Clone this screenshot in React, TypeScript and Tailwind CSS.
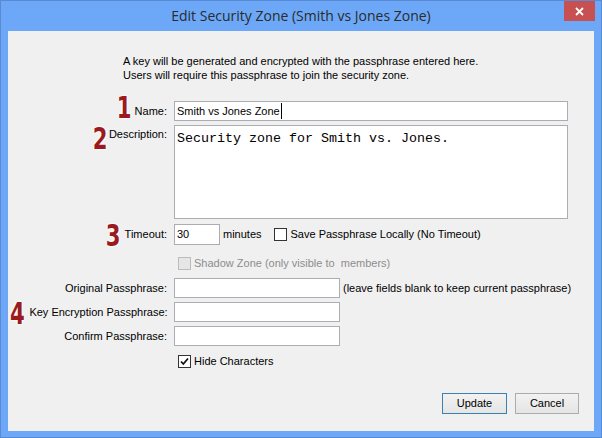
import React from "react";

const Mark = ({ n, className = "" }: { n: string; className?: string }) => (
  <span
    className={
      "inline-block scale-x-[0.76] font-['DejaVu_Sans_Condensed','Liberation_Sans',sans-serif] font-bold text-[31px] leading-[24px] text-[#9a1b1e] [text-shadow:0_0_2px_#fff,0_0_2px_#fff,0_0_2px_#fff,0_0_3px_#fff] " +
      className
    }
  >
    {n}
  </span>
);

const Box = ({ checked = false, disabled = false }: { checked?: boolean; disabled?: boolean }) => (
  <span
    className={
      "w-[13px] h-[13px] flex items-center justify-center border " +
      (disabled ? "border-[#bcbcbc] bg-[#e6e6e6]" : "border-[#333] bg-white")
    }
  >
    {checked && (
      <svg width="11" height="11" viewBox="0 0 11 11">
        <path d="M2 5.5 L4.3 8 L9 2.5" stroke="#111" strokeWidth="1.8" fill="none" />
      </svg>
    )}
  </span>
);

const Field = ({ w, children }: { w: string; children?: React.ReactNode }) => (
  <div className={"h-[20px] bg-white border border-[#abadb3] flex items-center px-[2px] " + w}>{children}</div>
);

const App = () => {
  return (
    <div className="w-[602px] h-[438px] bg-[#6ca8f7] border border-[#5a8bd2] flex flex-col relative font-['Liberation_Sans',Arial,sans-serif] text-[11px] text-black whitespace-nowrap">
      <div className="h-[30px] flex items-center justify-center font-['Open_Sans',sans-serif] text-[14px] text-[#2b2b2b] pb-[1px]">
        Edit Security Zone (Smith vs Jones Zone)
      </div>
      <div className="absolute right-[6px] top-0 w-[31px] h-[20px] bg-[#c75050] flex items-center justify-center">
        <svg width="9" height="9" viewBox="0 0 9 9">
          <path d="M1 1 L8 8 M8 1 L1 8" stroke="#fff" strokeWidth="1.8" />
        </svg>
      </div>

      <div className="flex-1 mx-[7px] mb-[6px] bg-[#f0f0f0] flex flex-col">
        <div className="mt-[23px] pl-[115px] leading-[14px]">
          <p>A key will be generated and encrypted with the passphrase entered here.</p>
          <p>Users will require this passphrase to join the security zone.</p>
        </div>

        <div className="mt-[19px] flex h-[20px] items-center">
          <div className="w-[159px] flex items-center justify-end gap-[3px]">
            <Mark n="1" className="-mt-[8px] origin-right" />
            <span>Name:</span>
          </div>
          <div className="ml-[7px]">
            <Field w="w-[394px]">
              <span className="border-r border-black pr-[1px]">Smith vs Jones Zone</span>
            </Field>
          </div>
        </div>

        <div className="mt-[4px] flex">
          <div className="w-[159px] flex items-start justify-end gap-[2px]">
            <Mark n="2" className="mt-[1px] origin-right" />
            <span className="mt-[1px]">Description:</span>
          </div>
          <div className="ml-[7px] w-[394px] h-[94px] bg-white border border-[#abadb3] px-[2px] pt-[5px] font-['Liberation_Mono',monospace] text-[13.33px] leading-[16px]">
            Security zone for Smith vs. Jones.
          </div>
        </div>

        <div className="mt-[5px] flex h-[21px] items-center">
          <div className="w-[159px] flex items-center justify-end gap-[4px]">
            <Mark n="3" className="mt-[1px] origin-right" />
            <span>Timeout:</span>
          </div>
          <div className="ml-[7px] flex items-center">
            <div className="w-[46px] h-[21px] bg-white border border-[#abadb3] flex items-center px-[2px]">30</div>
            <span className="ml-[3px]">minutes</span>
            <span className="ml-[12px]">
              <Box />
            </span>
            <span className="ml-[4px]">Save Passphrase Locally (No Timeout)</span>
          </div>
        </div>

        <div className="mt-[8px] flex h-[20px] items-center pl-[170px] gap-[3px] text-[#8d8d8d]">
          <Box disabled />
          <span>Shadow Zone (only visible to&nbsp; members)</span>
        </div>

        <div className="mt-[5px] flex h-[20px] items-center">
          <div className="w-[159px] text-right">Original Passphrase:</div>
          <div className="ml-[7px]">
            <Field w="w-[166px]" />
          </div>
          <span className="ml-[3px]">(leave fields blank to keep current passphrase)</span>
        </div>

        <div className="mt-[4px] flex h-[20px] items-center">
          <div className="w-[159px] flex items-center justify-between pl-[2px]">
            <Mark n="4" className="mt-[1px] origin-left" />
            <span>Key Encryption Passphrase:</span>
          </div>
          <div className="ml-[7px]">
            <Field w="w-[166px]" />
          </div>
        </div>

        <div className="mt-[4px] flex h-[20px] items-center">
          <div className="w-[159px] text-right">Confirm Passphrase:</div>
          <div className="ml-[7px]">
            <Field w="w-[166px]" />
          </div>
        </div>

        <div className="mt-[5px] flex h-[20px] items-center pl-[170px] gap-[3px]">
          <Box checked />
          <span>Hide Characters</span>
        </div>

        <div className="mt-[22px] flex justify-end gap-[8px] pr-[15px]">
          <button className="w-[65px] h-[21px] border border-[#3c7fb1] bg-gradient-to-b from-[#f2f2f2] to-[#e5e5e5] text-[11px]">
            Update
          </button>
          <button className="w-[64px] h-[21px] border border-[#acacac] bg-gradient-to-b from-[#f2f2f2] to-[#e5e5e5] text-[11px]">
            Cancel
          </button>
        </div>
      </div>
    </div>
  );
};

export default App;
